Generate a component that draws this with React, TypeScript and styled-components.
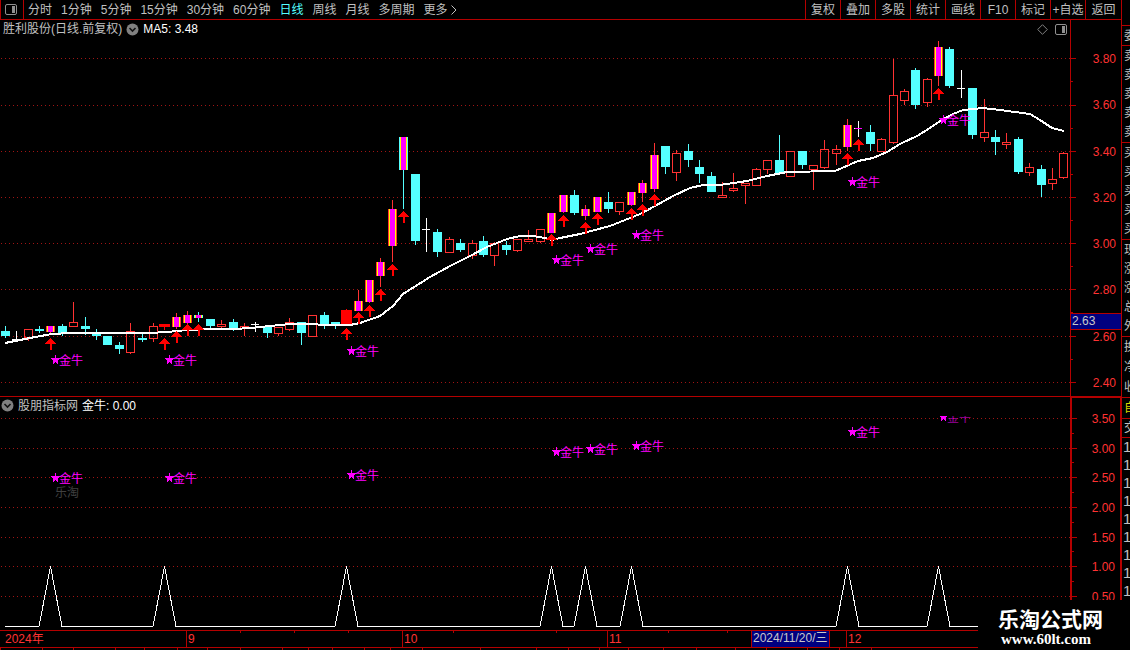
import React from "react";
import styled, { createGlobalStyle } from "styled-components";

const LINE = "#b40000";
const RED = "#ff3232";
const CYAN = "#54ffff";
const MAGENTA = "#ff00ff";

const GlobalStyle = createGlobalStyle`
  * { box-sizing: border-box; }
  html, body { margin: 0; background: #000; }
  body {
    overflow: hidden;
    color: #c0c0c0;
    font: 12px/16px "Liberation Sans", "Noto Sans CJK SC", sans-serif;
  }
  svg { display: block; }
`;

const Screen = styled.div`
  position: relative;
  display: grid;
  grid-template-columns: minmax(0, 1fr) 9px;
  height: 100vh;
  overflow: hidden;
`;

const Main = styled.main`
  min-width: 0;
`;

const Toolbar = styled.nav`
  display: flex;
  height: 20px;
  border-bottom: 1px solid ${LINE};
  white-space: nowrap;
`;

const LayoutButton = styled.button`
  display: grid;
  place-items: center;
  width: 24px;
  padding: 0 2px 0 0;
  border: solid ${LINE};
  border-width: 0 1px;
  background: none;
`;

const Periods = styled.div`
  display: flex;
  flex: 1;
  align-items: center;
  gap: 9px;
  padding-left: 4px;
`;

const PeriodButton = styled.button<{ $active?: boolean }>`
  display: flex;
  align-items: center;
  gap: 2px;
  padding: 0;
  border: 0;
  background: none;
  font: inherit;
  color: ${(p) => (p.$active ? CYAN : "#c0c0c0")};
`;

const ToolButton = styled.button`
  width: 35px;
  padding: 0;
  border: 0;
  border-left: 1px solid ${LINE};
  background: none;
  font: inherit;
  color: #c0c0c0;
  &:last-child {
    width: 36px;
  }
`;

const Panel = styled.section`
  display: grid;
  grid-template-columns: minmax(0, 1fr) 51px;
  border-bottom: 1px solid ${LINE};
`;

const Plot = styled.div`
  min-width: 0;
`;

const PlotHeader = styled.header<{ $height: number; $inset: number }>`
  display: flex;
  align-items: center;
  gap: 4px;
  height: ${(p) => p.$height}px;
  padding: 0 3px 2px ${(p) => p.$inset}px;
`;

const Reading = styled.span`
  flex: 1;
  color: #fff;
`;

const HeaderTools = styled.div`
  display: flex;
  align-items: center;
  gap: 7px;
`;

const PlotSvg = styled.svg`
  width: 100%;
  shape-rendering: crispEdges;
`;

const Axis = styled.div<{ $heavy?: boolean }>`
  position: relative;
  display: flex;
  justify-content: space-between;
  border: solid ${LINE};
  border-width: ${(p) => (p.$heavy ? "1px 1px 0 2px" : "0 0 0 1px")};
  color: ${RED};
`;

const AxisLabels = styled.div<{ $top: number; $bottom: number }>`
  display: flex;
  flex-direction: column;
  justify-content: space-between;
  padding: ${(p) => `${p.$top}px 5px ${p.$bottom}px 0`};
`;

const PriceTag = styled.div`
  position: absolute;
  top: 293px;
  left: 0;
  width: 100%;
  height: 17px;
  padding-left: 1px;
  border: solid ${LINE};
  border-width: 1px 0;
  background: #000080;
  color: #c8c8c8;
  line-height: 15px;
`;

const TimeAxis = styled.div`
  position: relative;
  display: grid;
  height: 16px;
  color: ${RED};
  overflow: hidden;
`;

const TimeTicks = styled.svg`
  grid-area: 1 / 1;
  width: 100%;
  height: 16px;
  shape-rendering: crispEdges;
`;

const Months = styled.div`
  grid-area: 1 / 1;
  display: grid;
  grid-template-columns: 186px 216px 205px 239px 1fr;
`;

const Month = styled.span`
  padding-left: 1px;
  border-left: 1px solid ${LINE};
  &:first-child {
    padding-left: 5px;
    border: 0;
  }
`;

const DateTag = styled.time`
  position: absolute;
  left: 751px;
  top: 0;
  height: 16px;
  padding: 0 1px;
  border: solid ${LINE};
  border-width: 0 1px;
  background: #000080;
  color: #c8c8c8;
  line-height: 15px;
`;

const Footer = styled.svg`
  width: 100%;
  height: 4px;
  border-top: 1px solid ${LINE};
  shape-rendering: crispEdges;
`;

const Quotes = styled.aside`
  border-left: 1px solid ${LINE};
  overflow: hidden;
`;

const QuoteGroup = styled.div<{ $height: number; $color?: string; $large?: boolean }>`
  display: flex;
  flex-direction: column;
  justify-content: space-around;
  height: ${(p) => p.$height}px;
  padding-left: ${(p) => (p.$large ? 1 : 2)}px;
  border-bottom: 1px solid ${LINE};
  color: ${(p) => p.$color ?? "#c0c0c0"};
  font-size: ${(p) => (p.$large ? 15 : 12)}px;
  white-space: nowrap;
  &:last-child {
    border: 0;
  }
`;

const SiteMark = styled.div`
  position: absolute;
  right: 0;
  bottom: 0;
  width: 152px;
  height: 50px;
  padding: 6px 0 0 20px;
  background: #000;
  color: #fff;
`;

const SiteName = styled.div`
  font: bold 21px/24px "Noto Sans CJK SC", sans-serif;
`;

const SiteLink = styled.a`
  display: block;
  padding-left: 3px;
  color: #fff;
  font: bold 15px/18px "Liberation Serif", serif;
  text-decoration: none;
`;

/* kind, high, top, bottom, low
   d: falling, u: rising, x: doji, m: marked, c: marked falling, s: limit-up, p: marked doji */
type Candle = [string, number, number, number, number];

const candles: Candle[] = [
  ["d", 326, 331, 336, 338], ["x", 331, 339, 339, 340], ["u", 329, 329, 338, 341],
  ["d", 326, 329, 331, 333], ["m", 326, 326, 332, 333], ["d", 324, 326, 333, 336],
  ["u", 302, 322, 327, 327], ["d", 317, 326, 329, 335], ["d", 329, 334, 336, 340],
  ["d", 336, 336, 345, 345], ["d", 342, 345, 349, 354], ["u", 323, 331, 353, 354],
  ["d", 334, 338, 340, 342], ["u", 323, 326, 339, 342], ["s", 324, 324, 327, 330],
  ["m", 313, 317, 327, 329], ["m", 311, 315, 323, 324], ["c", 312, 315, 318, 322],
  ["d", 319, 319, 326, 328], ["u", 320, 324, 327, 328], ["d", 319, 322, 328, 331],
  ["u", 323, 326, 329, 336], ["x", 322, 324, 324, 332], ["d", 327, 327, 333, 338],
  ["u", 327, 327, 334, 336], ["u", 318, 322, 330, 331], ["d", 322, 322, 333, 345],
  ["u", 315, 315, 337, 337], ["d", 312, 315, 324, 329], ["d", 322, 322, 324, 329],
  ["s", 309, 310, 325, 325], ["m", 290, 301, 311, 311], ["m", 280, 280, 302, 303],
  ["m", 258, 262, 276, 287], ["m", 200, 209, 246, 262], ["c", 137, 137, 170, 209],
  ["d", 174, 174, 241, 245], ["x", 218, 229, 229, 252], ["d", 229, 232, 252, 257],
  ["u", 237, 239, 253, 253], ["d", 239, 243, 250, 252], ["u", 240, 243, 256, 259],
  ["d", 236, 241, 255, 257], ["u", 242, 243, 256, 266], ["d", 241, 245, 250, 255],
  ["u", 239, 239, 251, 252], ["u", 230, 239, 242, 242], ["u", 229, 229, 242, 243],
  ["m", 213, 213, 233, 233], ["m", 195, 195, 212, 213], ["d", 190, 195, 213, 215],
  ["m", 205, 209, 216, 220], ["m", 197, 197, 212, 212], ["d", 192, 202, 209, 213],
  ["u", 202, 202, 212, 215], ["m", 192, 192, 205, 206], ["m", 180, 183, 193, 202],
  ["m", 143, 155, 189, 192], ["d", 146, 146, 167, 174], ["u", 150, 153, 173, 181],
  ["d", 144, 151, 160, 167], ["d", 160, 167, 174, 183], ["d", 172, 176, 192, 192],
  ["u", 182, 195, 198, 198], ["u", 173, 188, 191, 192], ["u", 183, 183, 186, 204],
  ["u", 168, 169, 186, 186], ["u", 160, 160, 170, 174], ["d", 135, 160, 173, 173],
  ["u", 151, 151, 177, 177], ["d", 151, 151, 165, 169], ["u", 165, 165, 170, 190],
  ["u", 140, 149, 168, 169], ["u", 145, 149, 154, 165], ["m", 119, 125, 147, 151],
  ["p", 121, 128, 128, 137], ["d", 125, 132, 144, 151], ["u", 138, 139, 152, 152],
  ["u", 59, 95, 143, 144], ["u", 89, 91, 101, 105], ["d", 68, 70, 105, 109],
  ["u", 78, 79, 103, 107], ["m", 41, 47, 76, 86], ["d", 47, 49, 86, 88],
  ["x", 70, 88, 88, 98], ["d", 88, 88, 135, 139], ["u", 99, 132, 138, 142],
  ["d", 130, 137, 142, 155], ["u", 133, 142, 145, 149], ["d", 137, 139, 172, 174],
  ["u", 163, 167, 173, 176], ["d", 165, 169, 185, 197], ["u", 168, 179, 184, 190],
  ["u", 152, 153, 178, 179],
];

const arrows: [number, number][] = [
  [4, 338], [14, 338], [15, 331], [16, 324], [17, 324], [30, 328], [31, 312],
  [32, 305], [33, 289], [34, 264], [35, 211], [48, 234], [49, 215], [51, 222],
  [52, 213], [55, 208], [56, 204], [57, 194], [74, 153], [75, 139], [82, 88],
];

const average =
  "5,343 20,340 35,337 52,334 70,333 107,333 150,333 167,332 187,330 210,329 235,329 250,328 270,326 290,324 313,324 323,325 350,325 360,323 380,316 393,306 403,294 430,277 450,266 470,256 487,247 507,239 520,236 533,236 545,238 552,240 560,238 580,234 610,226 640,214 655,206 673,196 690,188 703,185 720,185 747,181 767,176 787,172 835,171 858,161 873,158 887,152 900,144 917,136 930,128 940,121 953,114 963,110 983,108 1000,110 1030,114 1040,120 1052,128 1064,131";

const priceLines = [58, 105, 151, 197, 243, 289, 336, 382];
const signalLines = [418, 448, 477, 507, 537, 566, 596];
const priceMarks: [number, number][] = [
  [51, 360], [165, 360], [347, 351], [552, 260], [586, 249], [632, 235], [848, 182], [939, 120],
];
const signalMarks: [number, number][] = [
  [51, 478], [165, 478], [347, 475], [552, 452], [586, 449], [632, 446], [848, 432], [939, 417],
];
const peaks = [50, 164, 346, 551, 585, 631, 847, 938];

const centre = (i: number) => Math.floor(5.45 + i * 11.38);

function CandleShape({ x, data }: { x: number; data: Candle }) {
  const [kind, high, top, bottom, low] = data;
  const h = bottom - top;
  if (kind === "x" || kind === "p") {
    return (
      <g fill="#fff">
        <rect x={x} y={high} width="1" height={low - high} />
        <rect x={x - 4} y={top} width="8" height="1" />
        {kind === "p" && <rect x={x - 3} y={top} width="7" height="1" fill={MAGENTA} />}
      </g>
    );
  }
  if (kind === "u") {
    return (
      <g>
        <rect x={x} y={high} width="1" height={top - high} fill={RED} />
        <rect x={x} y={bottom} width="1" height={low - bottom} fill={RED} />
        <rect x={x - 4 + 0.5} y={top + 0.5} width="8" height={h - 1} fill="none" stroke={RED} />
      </g>
    );
  }
  const edge = kind === "d" || kind === "c" ? CYAN : RED;
  if (kind === "s") {
    return (
      <g fill="#ff0000">
        <rect x={x} y={high} width="1" height={low - high} />
        <rect x={x - 5} y={top} width="11" height={h} />
      </g>
    );
  }
  return (
    <g>
      <rect x={x} y={high} width="1" height={low - high} fill={edge} />
      <rect x={x - 4} y={top} width="9" height={h} fill={edge} />
      {kind !== "d" && (
        <>
          <rect x={x - 3} y={top} width="7" height={h} fill="#ffff00" />
          <rect x={x - 2} y={top} width="5" height={h} fill={MAGENTA} />
        </>
      )}
    </g>
  );
}

function Grid({ lines }: { lines: number[] }) {
  return (
    <>
      {lines.map((y) => (
        <line key={y} x1="1" x2="100%" y1={y + 0.5} y2={y + 0.5} stroke="#a01414" strokeDasharray="1 3" />
      ))}
    </>
  );
}

function StarMark({ x, y, dim }: { x: number; y: number; dim?: boolean }) {
  return (
    <g fill={MAGENTA}>
      <path d={`M${x + 4.5} ${y - 5}l1.3 3.4h3.7l-2.8 2.4 1 3.6-3.2-2.1-3.2 2.1 1-3.6-2.8-2.4h3.7z`} />
      <text x={x + 8} y={y + 5} opacity={dim ? 0.6 : 1}>金牛</text>
    </g>
  );
}

function Chevron() {
  return (
    <svg width="13" height="13" viewBox="0 0 13 13" aria-hidden="true">
      <circle cx="6.5" cy="6.5" r="6" fill="#808080" />
      <path d="M3.5 5l3 3 3-3" fill="none" stroke="#111" strokeWidth="1.6" />
    </svg>
  );
}

function LayoutIcon() {
  return (
    <svg width="12" height="11" viewBox="0 0 12 11" aria-hidden="true">
      <rect x=".5" y=".5" width="11" height="10" rx="1.5" fill="none" stroke="#909090" />
      <rect x="7" y="2" width="3" height="7" fill="#909090" />
    </svg>
  );
}

function Ticks({ major, offset, height }: { major: number[]; offset: number; height: number }) {
  return (
    <svg width="6" height={height} shapeRendering="crispEdges" aria-hidden="true">
      {major.map((y, i) => (
        <g key={y} fill={LINE}>
          <rect y={y - offset} width="5" height="1" />
          {i < major.length - 1 && (
            <rect y={Math.floor((y + major[i + 1]) / 2) - offset} width="2" height="1" />
          )}
        </g>
      ))}
    </svg>
  );
}

const periods = ["分时", "1分钟", "5分钟", "15分钟", "30分钟", "60分钟", "日线", "周线", "月线", "多周期"];
const tools = ["复权", "叠加", "多股", "统计", "画线", "F10", "标记", "+自选", "返回"];
const footerTicks = [0, 42, 73, 115, 144, 177, 207, 240, 282, 308, 332, 364, 390, 422, 480, 536, 568, 599, 628, 663, 696, 735, 766, 807, 839, 871];
const footerMarks: [number, number, string][] = [
  [8, 1, "#c0c0c0"], [11, 1, "#c0c0c0"], [15, 2, "#c0c0c0"], [20, 1, "#c0c0c0"], [51, 1, "#c0c0c0"],
  [828, 1, "#c0c0c0"], [845, 1, CYAN], [849, 4, CYAN], [857, 9, CYAN],
];

const quoteGroups: { height: number; rows: string[]; color?: string; large?: boolean }[] = [
  { height: 26, rows: [] },
  { height: 20, rows: ["委"] },
  { height: 97, rows: ["卖", "卖", "卖", "卖", "卖"] },
  { height: 97, rows: ["买", "买", "买", "买", "买"] },
  { height: 97, rows: ["现", "涨", "涨", "总", "外"] },
  { height: 61, rows: ["换", "净", "收"] },
  { height: 21, rows: ["自"], color: "#d8d800" },
  { height: 19, rows: ["交"] },
  { height: 162, rows: Array(9).fill("1"), large: true },
];

export default function App() {
  const signal =
    "5,626.5 " + peaks.map((x) => `${x - 11},626.5 ${x + 0.5},566.5 ${x + 12},626.5`).join(" ") + " 1064,626.5";
  return (
    <>
      <GlobalStyle />
      <Screen>
        <Main>
          <Toolbar>
            <LayoutButton aria-label="布局"><LayoutIcon /></LayoutButton>
            <Periods>
              {periods.map((p) => (
                <PeriodButton key={p} $active={p === "日线"}>{p}</PeriodButton>
              ))}
              <PeriodButton>
                更多
                <svg width="7" height="10" viewBox="0 0 7 10" aria-hidden="true">
                  <path d="M1.5 .5L6 5 1.5 9.5" fill="none" stroke="#c0c0c0" />
                </svg>
              </PeriodButton>
            </Periods>
            {tools.map((t) => (
              <ToolButton key={t}>{t}</ToolButton>
            ))}
          </Toolbar>

          <Panel>
            <Plot>
              <PlotHeader $height={20} $inset={3}>
                <span>胜利股份(日线.前复权)</span>
                <Chevron />
                <Reading>MA5: 3.48</Reading>
                <HeaderTools>
                  <svg width="11" height="11" viewBox="0 0 11 11" aria-hidden="true">
                    <path d="M5.5 .7l4.8 4.8-4.8 4.8L.7 5.5z" fill="none" stroke="#808080" />
                  </svg>
                  <LayoutIcon />
                </HeaderTools>
              </PlotHeader>
              <PlotSvg height="356" role="img" aria-label="日线">
                <g transform="translate(0 -40)">
                  <Grid lines={priceLines} />
                  {candles.map((c, i) => (
                    <CandleShape key={i} x={centre(i)} data={c} />
                  ))}
                  <polyline points={average} fill="none" stroke="#fff" strokeWidth="2" />
                  {arrows.map(([i, y]) => (
                    <path key={i} d={`M${centre(i) + 0.5} ${y}l5.5 6h-4.5v6h-2v-6h-4.5z`} fill="#ff0000" />
                  ))}
                  {priceMarks.map(([x, y]) => (
                    <StarMark key={x} x={x} y={y} />
                  ))}
                </g>
              </PlotSvg>
            </Plot>
            <Axis>
              <Ticks major={priceLines} offset={20} height={376} />
              <AxisLabels $top={31} $bottom={5}>
                {["3.80", "3.60", "3.40", "3.20", "3.00", "2.80", "2.60", "2.40"].map((v) => (
                  <span key={v}>{v}</span>
                ))}
              </AxisLabels>
              <PriceTag>2.63</PriceTag>
            </Axis>
          </Panel>

          <Panel>
            <Plot>
              <PlotHeader $height={19} $inset={1}>
                <Chevron />
                <span>股朋指标网</span>
                <Reading>金牛: 0.00</Reading>
              </PlotHeader>
              <PlotSvg height="214" role="img" aria-label="金牛">
                <g transform="translate(0 -416)">
                  <Grid lines={signalLines} />
                  <polyline points={signal} fill="none" stroke="#fff" />
                  {signalMarks.map(([x, y]) => (
                    <StarMark key={x} x={x} y={y} dim={y < 420} />
                  ))}
                  <text x="55" y="497" fill="#404040">乐淘</text>
                </g>
              </PlotSvg>
            </Plot>
            <Axis $heavy>
              <Ticks major={signalLines} offset={398} height={232} />
              <AxisLabels $top={13} $bottom={25}>
                {["3.50", "3.00", "2.50", "2.00", "1.50", "1.00", "0.50"].map((v) => (
                  <span key={v}>{v}</span>
                ))}
              </AxisLabels>
            </Axis>
          </Panel>

          <TimeAxis>
            <TimeTicks aria-hidden="true">
              {[240, 294, 348, 453, 556, 668, 727].map((x) => (
                <rect key={x} x={x} width="1" height="2" fill={LINE} />
              ))}
            </TimeTicks>
            <Months>
              {["2024年", "9", "10", "11", "12"].map((m) => (
                <Month key={m}>{m}</Month>
              ))}
            </Months>
            <DateTag dateTime="2024-11-20">2024/11/20/三</DateTag>
          </TimeAxis>
          <Footer aria-hidden="true">
            {footerTicks.map((x) => (
              <rect key={x} x={x} width="1" height="3" fill={LINE} />
            ))}
            {footerMarks.map(([x, w, c]) => (
              <rect key={x} x={x} y="2" width={w} height="1" fill={c} />
            ))}
          </Footer>
        </Main>

        <Quotes>
          {quoteGroups.map((g, i) => (
            <QuoteGroup key={i} $height={g.height} $color={g.color} $large={g.large}>
              {g.rows.map((r, j) => (
                <span key={j}>{r}</span>
              ))}
            </QuoteGroup>
          ))}
        </Quotes>

        <SiteMark>
          <SiteName>乐淘公式网</SiteName>
          <SiteLink href="#">www.60lt.com</SiteLink>
        </SiteMark>
      </Screen>
    </>
  );
}
